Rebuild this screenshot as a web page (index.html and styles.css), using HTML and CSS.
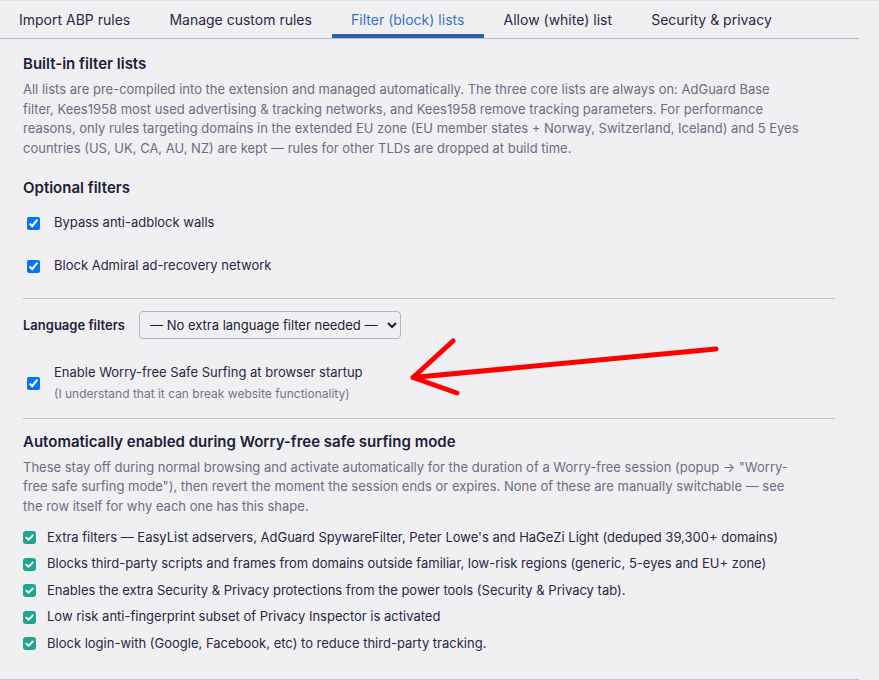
FILE: index.html
```html
<!DOCTYPE html>
<html lang="en">
<head>
<meta charset="utf-8">
<title>Options — Filter (block) lists</title>
<link rel="stylesheet" href="styles.css">
</head>
<body>
<div class="page">
  <nav class="tabs">
    <a class="tab">Import ABP rules</a>
    <a class="tab">Manage custom rules</a>
    <a class="tab active">Filter (block) lists</a>
    <a class="tab">Allow (white) list</a>
    <a class="tab">Security &amp; privacy</a>
  </nav>

  <main class="content">
    <section class="section">
      <h2 class="heading">Built-in filter lists</h2>
      <p class="desc">All lists are pre-compiled into the extension and managed automatically. The three core lists are always on: AdGuard Base filter, Kees1958 most used advertising &amp; tracking networks, and Kees1958 remove tracking parameters. For performance reasons, only rules targeting domains in the extended EU zone (EU member states + Norway, Switzerland, Iceland) and 5 Eyes countries (US, UK, CA, AU, NZ) are kept — rules for other TLDs are dropped at build time.</p>
    </section>

    <section class="section optional">
      <h2 class="heading">Optional filters</h2>
      <div class="options">
        <label class="option"><input type="checkbox" checked><span>Bypass anti-adblock walls</span></label>
        <label class="option"><input type="checkbox" checked><span>Block Admiral ad-recovery network</span></label>
      </div>
    </section>

    <hr class="divider">

    <div class="lang-row">
      <span class="lang-label">Language filters</span>
      <select class="lang-select">
        <option>— No extra language filter needed —</option>
      </select>
    </div>

    <label class="option startup">
      <input type="checkbox" checked>
      <span class="option-text">
        <span>Enable Worry-free Safe Surfing at browser startup</span>
        <span class="hint">(I understand that it can break website functionality)</span>
      </span>
    </label>

    <hr class="divider">

    <section class="section auto">
      <h2 class="heading">Automatically enabled during Worry-free safe surfing mode</h2>
      <p class="desc">These stay off during normal browsing and activate automatically for the duration of a Worry-free session (popup → "Worry-free safe surfing mode"), then revert the moment the session ends or expires. None of these are manually switchable — see the row itself for why each one has this shape.</p>
      <ul class="auto-list">
        <li><span class="tick"><svg viewBox="0 0 13 13"><path d="M3.3 6.7l2.2 2.1 4.2-4.3"/></svg></span>Extra filters — EasyList adservers, AdGuard SpywareFilter, Peter Lowe's and HaGeZi Light (deduped 39,300+ domains)</li>
        <li><span class="tick"><svg viewBox="0 0 13 13"><path d="M3.3 6.7l2.2 2.1 4.2-4.3"/></svg></span>Blocks third-party scripts and frames from domains outside familiar, low-risk regions (generic, 5-eyes and EU+ zone)</li>
        <li><span class="tick"><svg viewBox="0 0 13 13"><path d="M3.3 6.7l2.2 2.1 4.2-4.3"/></svg></span>Enables the extra Security &amp; Privacy protections from the power tools (Security &amp; Privacy tab).</li>
        <li><span class="tick"><svg viewBox="0 0 13 13"><path d="M3.3 6.7l2.2 2.1 4.2-4.3"/></svg></span>Low risk anti-fingerprint subset of Privacy Inspector is activated</li>
        <li><span class="tick"><svg viewBox="0 0 13 13"><path d="M3.3 6.7l2.2 2.1 4.2-4.3"/></svg></span>Block login-with (Google, Facebook, etc) to reduce third-party tracking.</li>
      </ul>
    </section>
  </main>

  <svg class="pointer" width="879" height="680" viewBox="0 0 879 680" aria-hidden="true">
    <path d="M716 349L413 377.5M453 341L413 377.5L457 393"/>
  </svg>
</div>
</body>
</html>
```

FILE: styles.css
```css
* {
  box-sizing: border-box;
}

html,
body {
  margin: 0;
  padding: 0;
  background: #f0f0f3;
}

body {
  font-family: Inter, "Noto Sans", "Liberation Sans", sans-serif;
  color: #2b2642;
  border-top: 1px solid #e2e2e6;
}

.page {
  position: relative;
  width: 859px;
  border-bottom: 1px solid #c4c3cd;
}

/* tab strip */
.tabs {
  display: flex;
  border-bottom: 1px solid #b9b8c5;
}

.tab {
  display: block;
  height: 37px;
  padding: 0 19.6px;
  font-size: 14px;
  line-height: 38px;
  color: #2c2744;
  border-bottom: 4px solid transparent;
  cursor: pointer;
}

.tab:first-child {
  padding-left: 19px;
}

.tab.active {
  color: #3a72c3;
  border-bottom-color: #2a62b4;
}

/* main panel */
.content {
  padding: 0 24px 22px 23px;
}

.section {
  margin: 0;
}

.heading {
  margin: 15px 0 0;
  font-size: 15px;
  line-height: 19.5px;
  font-weight: 600;
  color: #221c38;
}

.desc {
  margin: 6.5px 0 0;
  max-width: 780px;
  font-size: 13px;
  line-height: 19.5px;
  color: #6f6b82;
}

.optional {
  margin-top: 20px;
}

.optional .heading {
  margin-top: 0;
}

.options {
  margin-top: 4px;
}

.option {
  display: flex;
  align-items: center;
  gap: 11px;
  padding: 11.75px 0;
  font-size: 13px;
  line-height: 19.5px;
  color: #2b2642;
}

.option input {
  margin: 3px 3px 3px 4px;
  flex: none;
}

.divider {
  margin: 10px 0 0;
  border: 0;
  border-top: 1px solid #c4c3cd;
  height: 0;
}

/* language selector */
.lang-row {
  display: flex;
  align-items: center;
  gap: 14px;
  margin-top: 12px;
}

.lang-label {
  font-size: 13px;
  font-weight: 600;
  color: #221c38;
}

.lang-select {
  width: 262px;
  height: 28px;
  padding: 0 6px;
  font-family: inherit;
  font-size: 13px;
  color: #221c38;
  background: #f0f0f3;
  border: 1px solid #b4b3bf;
  border-radius: 4px;
}

.startup {
  margin-top: 13px;
  padding-bottom: 3px;
}

.option-text {
  display: flex;
  flex-direction: column;
  gap: 2.5px;
}

.hint {
  font-size: 12px;
  line-height: 18px;
  color: #76728a;
}

.startup + .divider {
  margin-top: 12px;
}

.auto .heading {
  margin-top: 12.5px;
}

/* always-on list */
.auto-list {
  list-style: none;
  margin: 8px 0 0;
  padding: 0;
}

.auto-list li {
  display: flex;
  align-items: center;
  gap: 11px;
  height: 26.5px;
  font-size: 13px;
  line-height: 19.5px;
  color: #2b2642;
}

.tick {
  flex: none;
  width: 13px;
  height: 13px;
  border-radius: 3px;
  background: #1fa58b;
  display: flex;
}

.tick svg {
  width: 13px;
  height: 13px;
}

.tick path {
  fill: none;
  stroke: #ffffff;
  stroke-width: 1.8;
  stroke-linecap: round;
  stroke-linejoin: round;
}

/* annotation arrow over the startup option */
.pointer {
  position: absolute;
  left: 0;
  top: -1px;
  pointer-events: none;
}

.pointer path {
  fill: none;
  stroke: #ff0000;
  stroke-width: 5;
  stroke-linecap: round;
  stroke-linejoin: round;
}
```
